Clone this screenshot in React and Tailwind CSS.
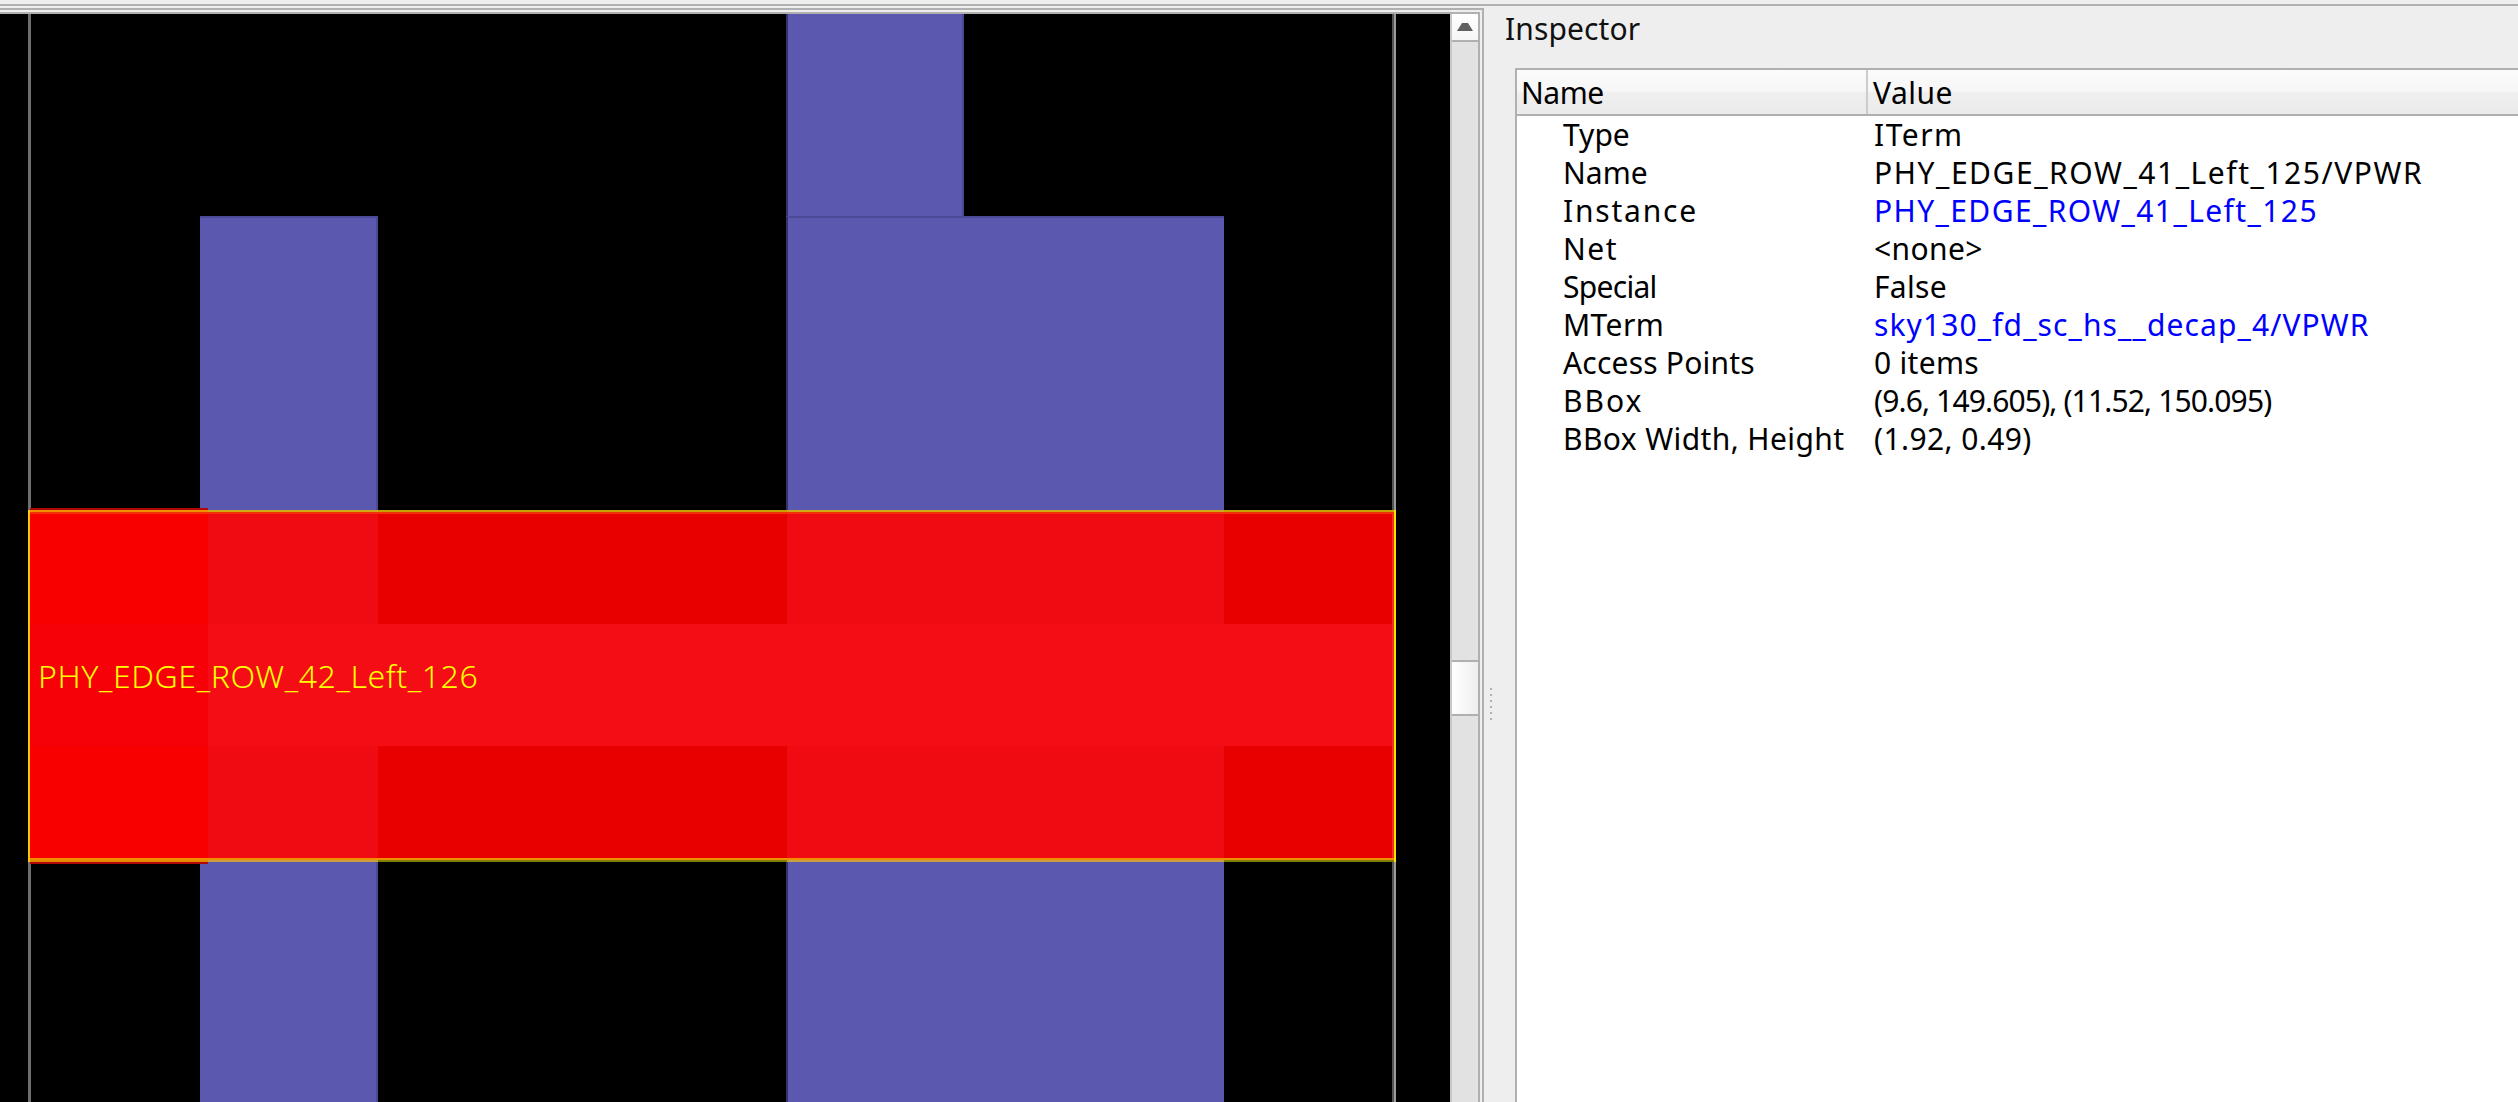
const rows = [
  ["Type", "ITerm", false, "tracking-[0px]", "tracking-[1.5px]"],
  ["Name", "PHY_EDGE_ROW_41_Left_125/VPWR", false, "tracking-[0px]", "tracking-[1.55px]"],
  ["Instance", "PHY_EDGE_ROW_41_Left_125", true, "tracking-[1.8px]", "tracking-[1.4px]"],
  ["Net", "<none>", false, "tracking-[1.5px]", "tracking-[0.4px]"],
  ["Special", "False", false, "tracking-[-0.7px]", "tracking-[0.3px]"],
  ["MTerm", "sky130_fd_sc_hs__decap_4/VPWR", true, "tracking-[0.4px]", "tracking-[1.1px]"],
  ["Access Points", "0 items", false, "tracking-[0.2px]", "tracking-[0.3px]"],
  ["BBox", "(9.6, 149.605), (11.52, 150.095)", false, "tracking-[2px]", "tracking-[-0.85px]"],
  ["BBox Width, Height", "(1.92, 0.49)", false, "tracking-[0.4px]", "tracking-[0.4px]"],
];

function Purple({ className }) {
  return <div className={"absolute bg-[#5a58af] " + className} />;
}

function Strip({ a, b, c }) {
  return (
    <div className="flex h-[2px] shrink-0">
      <div className={"w-[178px] " + a} />
      <div className={"w-[170px] " + b} />
      <div className={"w-[409px] " + c} />
      <div className={"w-[437px] " + b} />
      <div className={"flex-1 " + c} />
    </div>
  );
}

function Cells() {
  return (
    <>
      <div className="w-[178px] bg-[#f80000]" />
      <div className="w-[170px] bg-[#f00a12]" />
      <div className="w-[409px] bg-[#e80000]" />
      <div className="w-[437px] bg-[#f00a12]" />
      <div className="flex-1 bg-[#e80000]" />
    </>
  );
}

function Selection() {
  return (
    <div className="absolute left-[28px] top-[494px] flex w-[1368px] flex-col">
      <div className="ml-[2px] h-[2px] w-[178px] bg-[#b00808]" />
      <div className="flex h-[352px] flex-col border-x-2 border-l-[#ffc800] border-r-[#ffe000]">
        <Strip a="bg-[#f09000]" b="bg-[#d0a818]" c="bg-[#c8a000]" />
        <div className="h-[2px] shrink-0 bg-[#f03008]" />
        <div className="flex flex-1 flex-col border-r-2 border-[#f03020]">
          <div className="flex h-[110px]">
            <Cells />
          </div>
          <div className="flex h-[122px]">
            <div className="w-[178px] bg-[#f60108]" />
            <div className="flex-1 bg-[#f50d15]" />
          </div>
          <div className="flex flex-1">
            <Cells />
          </div>
        </div>
        <div className="h-[2px] shrink-0 bg-[#f09000]" />
        <Strip a="bg-[#e08a00]" b="bg-[#c8a040]" c="bg-[#808000]" />
      </div>
      <div className="ml-[2px] h-[2px] w-[178px] bg-[#b00808]" />
      {/* instance label over the selection */}
      <div className="absolute left-[10px] top-[143px] whitespace-nowrap text-[32px] leading-[50px] font-light tracking-[0.6px] text-[#ffff00]">
        PHY_EDGE_ROW_42_Left_126
      </div>
    </div>
  );
}

function Canvas() {
  return (
    <div className="relative h-full w-[1450px] overflow-hidden bg-black">
      <div className="absolute left-[28px] top-0 bottom-0 w-[3px] bg-[#6e6e6e]" />
      <div className="absolute left-[1392px] top-0 bottom-0 w-[4px] border-l-2 border-[#555555] bg-[#9a9a9a]" />
      <Purple className="left-[200px] top-[202px] h-[900px] w-[178px] border-t-2 border-r-2 border-[#4c4a96]" />
      <Purple className="left-[786px] top-0 h-[204px] w-[178px] border-x-2 border-l-[#33326b] border-r-[#4c4a96]" />
      <Purple className="left-[786px] top-[202px] h-[900px] w-[438px] border-t-2 border-l-2 border-t-[#4c4a96] border-l-[#33326b]" />
      <Selection />
    </div>
  );
}

function Scrollbar() {
  return (
    <div className="flex h-full w-[28px] flex-col border-l-2 border-[#c8c8c8] bg-[#e2e2e2]">
      <div className="flex h-[28px] shrink-0 items-center justify-center border-b-2 border-[#b0b0b0] bg-[linear-gradient(#ffffff,#f6f6f6)]">
        <svg width="16" height="8" viewBox="0 0 16 8">
          <path d="M5 0 H11 L16 8 H0 Z" fill="#606060" />
        </svg>
      </div>
      <div className="h-[618px] shrink-0" />
      <div className="h-[56px] shrink-0 border-y-2 border-[#b0b0b0] bg-[linear-gradient(90deg,#ffffff,#eeeeee)]" />
      <div className="flex-1" />
    </div>
  );
}

function Row({ name, value, link, nameTrack, valueTrack }) {
  return (
    <div className="flex h-[38px] shrink-0 items-center whitespace-nowrap pb-[2px]">
      <div className={"w-[357px] shrink-0 pl-[46px] text-black " + nameTrack}>{name}</div>
      <div className={(link ? "text-[#0000ff] " : "text-black ") + valueTrack}>{value}</div>
    </div>
  );
}

export default function App() {
  return (
    <div
      className="h-[1102px] w-[2518px] overflow-hidden bg-[#eeeeee] pt-1 text-[30px]"
      style={{ fontFamily: '"Noto Sans", "Open Sans", sans-serif' }}
    >
      <div className="flex h-[1098px] border-t-2 border-[#b0b0b0]">
        {/* Layout viewer dock */}
        <div className="w-[1484px] shrink-0 pt-[2px]">
          <div className="h-full border-t-2 border-r-2 border-[#b0b0b0] pt-[2px] pr-[2px]">
            <div className="flex h-full border-t-2 border-r-2 border-[#b0b0b0]">
              <Canvas />
              <Scrollbar />
            </div>
          </div>
        </div>

        {/* Splitter */}
        <div className="w-[14px] shrink-0 pl-[6px] pt-[682px]">
          <div className="flex flex-col gap-[4px]">
            {[0, 1, 2, 3, 4, 5].map((i) => (
              <div key={i} className="h-[2px] w-[2px] bg-[#b0b0b0]" />
            ))}
          </div>
        </div>

        {/* Inspector dock */}
        <div className="flex flex-1 flex-col">
          <div className="h-[62px] shrink-0 pl-[7px] pt-[3px] leading-[40px] tracking-[0.1px] text-[#111111]">Inspector</div>
          <div className="ml-[17px] flex flex-1 flex-col border-l-2 border-t-2 border-[#b0b0b0] bg-white">
            <div className="flex h-[46px] shrink-0 items-center border-b-2 border-[#b0b0b0] bg-[linear-gradient(#fbfbfb,#f6f6f6_50%,#efefef_50%,#ebebeb)]">
              <div className="flex h-full w-[351px] shrink-0 items-center border-r-2 border-[#cccccc] pl-[4px] tracking-[-0.5px] text-black">Name</div>
              <div className="pl-[5px] tracking-[0.5px] text-black">Value</div>
            </div>
            {rows.map(([n, v, l, nt, vt]) => (
              <Row key={n} name={n} value={v} link={l} nameTrack={nt} valueTrack={vt} />
            ))}
          </div>
        </div>
      </div>
    </div>
  );
}
